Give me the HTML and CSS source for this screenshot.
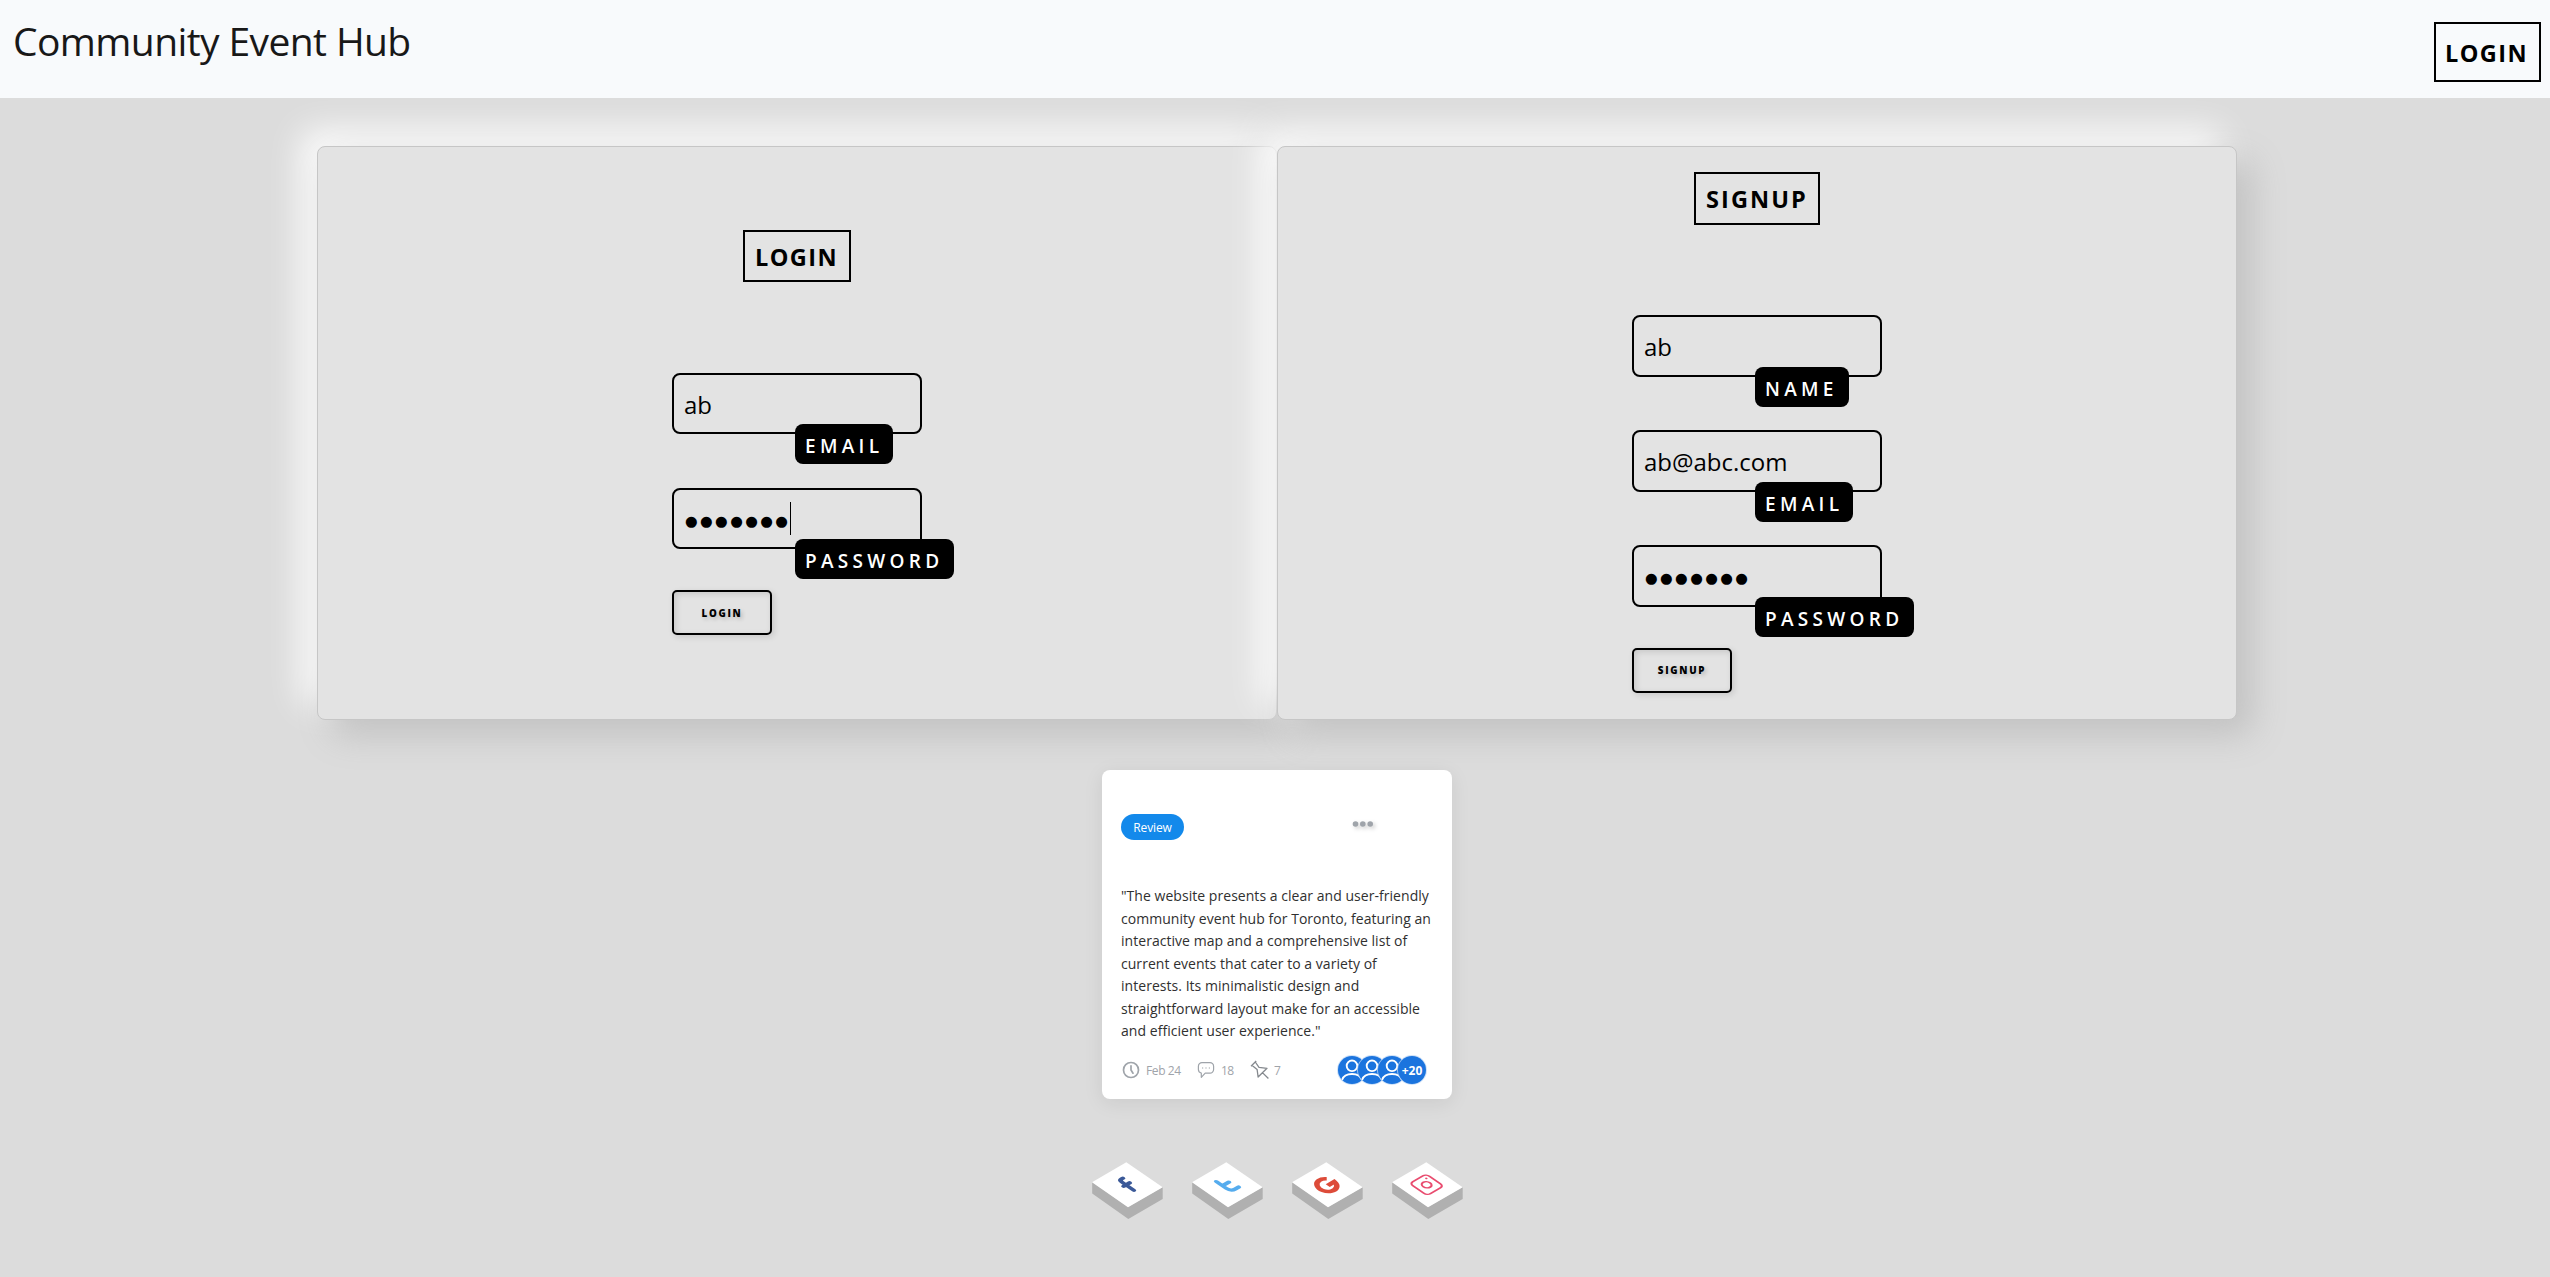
FILE: index.html
```html
<!DOCTYPE html>
<html lang="en">
<head>
<meta charset="utf-8">
<title>Community Event Hub</title>
<link rel="stylesheet" href="styles.css">
</head>
<body>
<header class="topbar">
  <h1 class="brand">Community Event Hub</h1>
  <a class="boxed nav-login">LOGIN</a>
</header>
<main class="page">
  <section class="forms">
    <form class="panel">
      <h2 class="boxed panel-title title-login">LOGIN</h2>
      <div class="fields">
        <div class="field"><span class="value">ab</span><label class="tag tag-email">EMAIL</label></div>
        <div class="field"><span class="value dots">●●●●●●●</span><i class="caret"></i><label class="tag tag-password">PASSWORD</label></div>
        <button type="button" class="submit submit-login">LOGIN</button>
      </div>
    </form>
    <form class="panel panel-signup">
      <h2 class="boxed panel-title title-signup">SIGNUP</h2>
      <div class="fields">
        <div class="field"><span class="value">ab</span><label class="tag tag-name">NAME</label></div>
        <div class="field"><span class="value">ab@abc.com</span><label class="tag tag-email">EMAIL</label></div>
        <div class="field"><span class="value dots">●●●●●●●</span><label class="tag tag-password">PASSWORD</label></div>
        <button type="button" class="submit submit-signup">SIGNUP</button>
      </div>
    </form>
  </section>

  <article class="review">
    <div class="review-head">
      <span class="badge">Review</span>
      <svg class="more" width="24" height="12" viewBox="0 0 24 12"><g fill="#9fa4aa"><circle cx="3.5" cy="5" r="2.8"/><circle cx="10.8" cy="5" r="2.8"/><circle cx="18.2" cy="5" r="2.8"/></g></svg>
    </div>
    <p class="quote"><span>"The website presents a clear and user-friendly</span><span>community event hub for Toronto, featuring an</span><span>interactive map and a comprehensive list of</span><span>current events that cater to a variety of</span><span>interests. Its minimalistic design and</span><span>straightforward layout make for an accessible</span><span>and efficient user experience."</span></p>
    <div class="review-foot">
      <svg class="clock" width="18" height="18" viewBox="0 0 18 18" fill="none" stroke="#9fa4aa" stroke-width="1.7" stroke-linecap="round"><circle cx="9" cy="9" r="7.5"/><path d="M9 4.8V9l2 3.2"/></svg>
      <span class="meta date">Feb 24</span>
      <svg class="bubble" width="18" height="18" viewBox="0 0 18 18" fill="none" stroke="#9fa4aa" stroke-width="1.2" stroke-linejoin="round"><path d="M5 1.6h8a3.6 3.6 0 0 1 3.6 3.6v3.4A3.6 3.6 0 0 1 13 12.2H8.2L4.3 16.3v-4.2A3.6 3.6 0 0 1 1.4 8.600V5.2A3.600 3.600 0 0 1 5 1.600z"/><path d="M5 7h1.200M8.400 7h1.200M11.800 7H13"/></svg>
      <span class="meta count">18</span>
      <svg class="pin" width="20" height="20" viewBox="0 0 20 20" fill="none" stroke="#85898e" stroke-width="1.300" stroke-linejoin="round"><path d="M6.200 1L1 6.200M5.300 2L9 7.300 17 8.300 8.100 17 7.100 9.400 2.200 5.400M12.400 12.600L18.400 18.500"/></svg>
      <span class="meta pins">7</span>
      <div class="people">
        <span class="avatar"><svg width="28" height="28" viewBox="0 0 28 28" fill="none" stroke="#fff" stroke-width="1.900"><circle cx="14" cy="9.800" r="5.300"/><path d="M4 24c1.500-4.500 5.500-6 10-6s8.500 1.500 10 6"/></svg></span>
        <span class="avatar"><svg width="28" height="28" viewBox="0 0 28 28" fill="none" stroke="#fff" stroke-width="1.900"><circle cx="14" cy="9.800" r="5.300"/><path d="M4 24c1.500-4.500 5.500-6 10-6s8.500 1.500 10 6"/></svg></span>
        <span class="avatar"><svg width="28" height="28" viewBox="0 0 28 28" fill="none" stroke="#fff" stroke-width="1.900"><circle cx="14" cy="9.800" r="5.300"/><path d="M4 24c1.500-4.500 5.500-6 10-6s8.500 1.500 10 6"/></svg></span>
        <span class="avatar extra">+20</span>
      </div>
    </div>
  </article>

  <nav class="social">
    <svg width="72" height="58" viewBox="0 0 72 58"><path class="side" d="M.2 20L36 45l34.700-20v12L36.300 57 .2 31.500z"/><path class="top" d="M0 20.300L34.300.3l36.400 25L36 45.300z"/>
      <g transform="matrix(.343 -.2 .364 .25 0 20.300)"><path fill="none" stroke="#3b5998" stroke-width="9.500" stroke-linecap="round" stroke-linejoin="round" d="M47.500 70V37q0-7 7-7h4M40.500 48.500h18"/></g></svg>
    <svg width="72" height="58" viewBox="0 0 72 58"><path class="side" d="M.2 20L36 45l34.700-20v12L36.300 57 .2 31.500z"/><path class="top" d="M0 20.300L34.300.3l36.400 25L36 45.300z"/>
      <g transform="matrix(.343 -.2 .364 .25 0 20.300)"><path fill="none" stroke="#55acee" stroke-width="9.500" stroke-linecap="round" d="M40 29v27q0 13 13 13h10M40 46h19"/></g></svg>
    <svg width="72" height="58" viewBox="0 0 72 58"><path class="side" d="M.2 20L36 45l34.700-20v12L36.300 57 .2 31.500z"/><path class="top" d="M0 20.300L34.300.3l36.400 25L36 45.300z"/>
      <g transform="matrix(.343 -.2 .364 .25 0 20.300)"><path fill="none" stroke="#dd4b39" stroke-width="11" d="M63 36A20 20 0 1 0 68.500 52H49"/></g></svg>
    <svg width="72" height="58" viewBox="0 0 72 58"><path class="side" d="M.2 20L36 45l34.700-20v12L36.300 57 .2 31.500z"/><path class="top" d="M0 20.300L34.300.3l36.400 25L36 45.300z"/>
      <g transform="matrix(.343 -.2 .364 .25 0 20.300)" fill="none" stroke="#e94c6f" stroke-width="4.600"><rect x="25" y="25" width="48" height="48" rx="9"/><circle cx="49" cy="49" r="9.700"/><circle cx="63" cy="35" r="2.500" fill="#e94c6f" stroke="none"/></g></svg>
  </nav>
</main>
</body>
</html>
```
FILE: styles.css
```css
* { box-sizing: border-box; }
body {
  margin: 0;
  min-height: 1277px;
  background: #dcdcdc;
  color: #000;
  font-family: "Open Sans", "Noto Sans", sans-serif;
}
.topbar {
  height: 98px;
  padding: 0 9px 0 13px;
  display: flex;
  justify-content: space-between;
  align-items: flex-start;
  background: #f8fafc;
}
.brand {
  margin: 13px 0 0;
  font-size: 39px;
  line-height: 56px;
  font-weight: 400;
  letter-spacing: -.6px;
  color: #181818;
  white-space: nowrap;
}
.boxed {
  border: 2px solid #000;
  font-weight: 700;
  font-size: 23.500px;
  letter-spacing: 1.400px;
  white-space: nowrap;
  text-align: left;
  padding-left: 9px;
}
.nav-login { width: 107px; height: 60px; margin-top: 22px; line-height: 58px; }
.page { display: flex; flex-direction: column; align-items: center; }
.forms { display: flex; width: 1920px; margin: 48px 0 0 4px; }
.panel {
  width: 960px;
  height: 574px;
  padding-bottom: 1px;
  display: flex;
  flex-direction: column;
  align-items: center;
  justify-content: center;
  border: 1px solid #c6c6c6;
  border-radius: 8px;
  background: #e3e3e3;
  box-shadow: 15px 15px 35px #c1c1c1, -15px -15px 35px #fff;
}
.panel-title { margin: 0 0 91px; height: 52px; line-height: 50px; }
.title-login { width: 108px; padding-left: 10px; }
.title-signup { width: 126px; padding-left: 10px; letter-spacing: 2.100px; line-height: 50px; }
.fields { width: 250px; display: flex; flex-direction: column; align-items: flex-start; }
.field {
  position: relative;
  width: 250px;
  height: 61px;
  margin-bottom: 54px;
  padding: 0 10px;
  display: flex;
  align-items: center;
  border: 2px solid #000;
  border-radius: 8px;
}
.field:nth-last-child(2) { margin-bottom: 41px; }
.panel-signup { padding-bottom: 2px; }
.panel-signup .panel-title { height: 53px; margin-bottom: 90px; }
.panel-signup .field { height: 62px; margin-bottom: 53px; }
.panel-signup .field:nth-last-child(2) { margin-bottom: 41px; }
.value { font-size: 24px; line-height: 32px; letter-spacing: 0; padding-top: 3px; }
.dots { font-family: "DejaVu Sans", sans-serif; font-size: 14.500px; letter-spacing: 2.400px; padding: 5px 0 0 1px; }
.caret { position: absolute; left: 116px; top: 12px; width: 1px; height: 33px; background: #000; }
.tag {
  position: absolute;
  left: 121px;
  top: 49px;
  height: 40px;
  padding-left: 10px;
  border-radius: 8px;
  background: #000;
  color: #fff;
  font-size: 19px;
  line-height: 44px;
  font-weight: 600;
  letter-spacing: 4.300px;
  white-space: nowrap;
}
.panel-signup .tag { top: 50px; }
.tag-email { width: 98px; }
.tag-name { width: 94px; }
.tag-password { width: 159px; }
.submit {
  width: 100px;
  height: 45px;
  padding: 2px 0 0;
  border: 2px solid #000;
  border-radius: 5px;
  background: transparent;
  color: #000;
  font: 800 9.800px/20px "Open Sans", sans-serif;
  letter-spacing: 1.700px;
  text-shadow: 2px 2px 4px rgba(0,0,0,.2);
  box-shadow: 2px 2px 6px rgba(0,0,0,.12), inset 2px 2px 6px rgba(0,0,0,.12);
}
.review {
  width: 350px;
  height: 329px;
  margin: 50px 0 0 4px;
  padding: 44px 19px 0;
  border-radius: 8px;
  background: #fff;
  box-shadow: 0 4px 20px rgba(0,0,0,.08);
}
.review-head { display: flex; justify-content: space-between; height: 68px; padding-right: 57px; }
.badge {
  width: 63px;
  height: 26px;
  border-radius: 13px;
  background: #1389eb;
  color: #fff;
  font-size: 12px;
  line-height: 28px;
  text-align: center;
  letter-spacing: -.1px;
}
.more { margin-top: 5px; overflow: visible; filter: drop-shadow(2px 2px 2px rgba(0,0,0,.2)); }
.quote { margin: 3px 0 0; font-size: 14px; line-height: 22.500px; color: #303030; letter-spacing: .04px; }
.quote span { display: block; white-space: nowrap; }
.review-foot { display: flex; align-items: center; height: 28px; margin-top: 13.500px; }
.meta { font-size: 12px; color: #9fa4aa; white-space: nowrap; padding-top: 1px; }
.clock { margin-left: 1px; }
.date { width: 52px; padding-left: 6px; letter-spacing: -.4px; }
.count { width: 36px; padding-left: 6px; letter-spacing: -.5px; }
.bubble { margin-left: 5px; }
.pin { margin-left: -1px; }
.pins { padding-left: 4px; }
.people { display: flex; margin-left: auto; margin-right: 7px; }
.avatar {
  width: 28px;
  height: 28px;
  margin-left: -8px;
  flex: none;
  border-radius: 50%;
  background: #1b74de;
  box-shadow: 0 0 0 1px rgba(190,215,245,.75);
  overflow: hidden;
}
.avatar svg { display: block; }
.extra { color: #fff; font-size: 12px; font-weight: 700; line-height: 29px; text-align: center; }
.social { display: flex; gap: 28px; margin: 63px 0 0 5px; }
.side { fill: #b0b0b0; }
.top { fill: #fff; }
```
